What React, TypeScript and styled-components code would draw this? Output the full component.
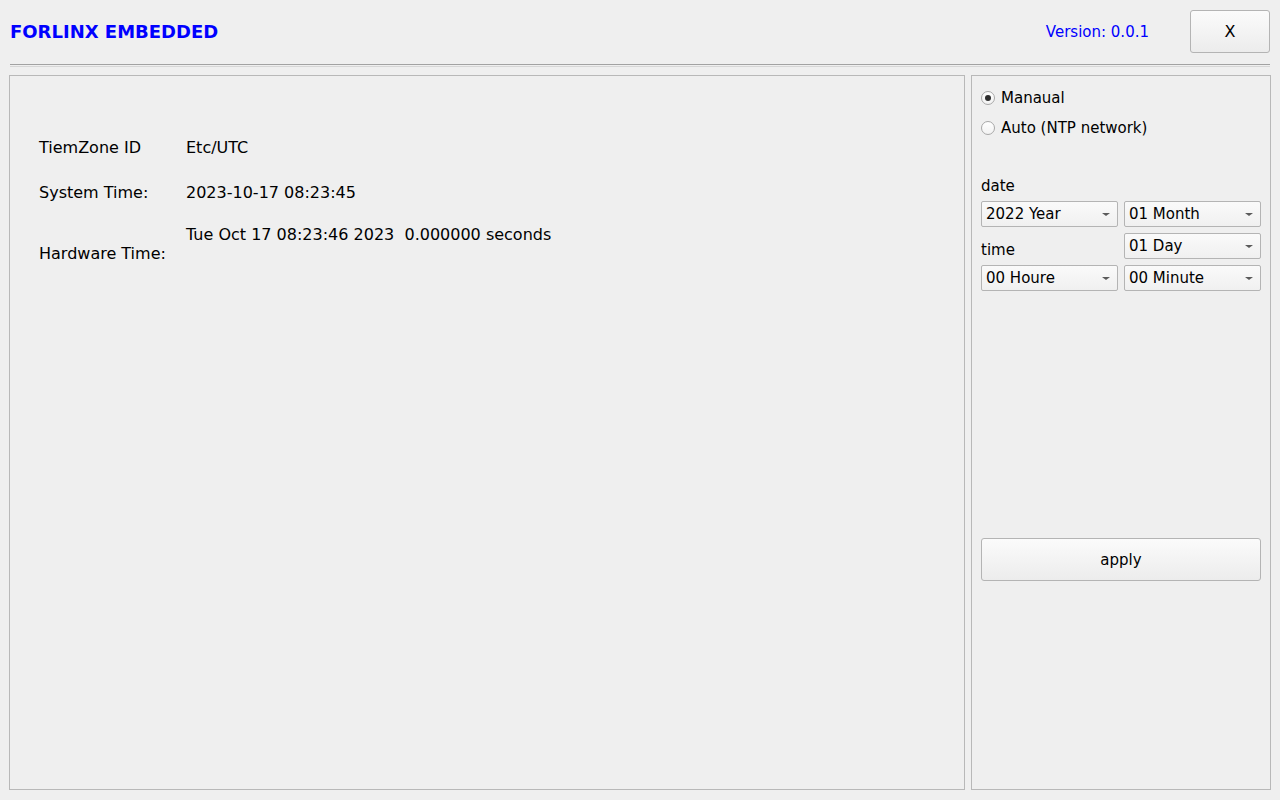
import React, { useState } from 'react';
import styled, { createGlobalStyle } from 'styled-components';

const GlobalStyle = createGlobalStyle`
  html, body {
    margin: 0;
    padding: 0;
    background: #efefef;
  }
  body {
    font-family: "DejaVu Sans", "Liberation Sans", sans-serif;
    font-size: 16px;
    color: #000;
  }
`;

const Page = styled.div`
  width: 1280px;
  height: 800px;
  box-sizing: border-box;
  padding: 10px 9px 10px 9px;
  display: flex;
  flex-direction: column;
`;

const Header = styled.div`
  display: flex;
  align-items: center;
  height: 43px;
  margin: 0 1px;
`;

const Title = styled.div`
  flex: 1;
  color: #0000ff;
  font-weight: bold;
  font-size: 18px;
`;

const Version = styled.div`
  color: #0000ff;
  font-size: 15px;
  margin-right: 41px;
`;

const PushButton = styled.button<{ $wide?: boolean }>`
  font-family: inherit;
  font-size: ${(p) => (p.$wide ? '15px' : '16px')};
  color: #000;
  height: 43px;
  width: ${(p) => (p.$wide ? '100%' : '80px')};
  border: 1px solid #b4b4b4;
  border-radius: 3px;
  background: linear-gradient(#fbfbfb, #ececec);
  padding: 0;
  cursor: pointer;
`;

const Separator = styled.div`
  margin: 11px 1px 0 1px;
  height: 1px;
  border-top: 1px solid #a2a2a2;
  border-bottom: 1px solid #d6d6d6;
`;

const Body = styled.div`
  flex: 1;
  display: flex;
  gap: 6px;
  margin-top: 8px;
`;

const Panel = styled.div<{ $width?: number }>`
  box-sizing: border-box;
  border: 1px solid #b8b8b8;
  ${(p) => (p.$width ? `width: ${p.$width}px;` : 'flex: 1;')}
`;

const InfoGrid = styled.div`
  display: grid;
  grid-template-columns: 147px auto;
  grid-auto-rows: min-content;
  row-gap: 25px;
  padding: 62px 0 0 29px;
  line-height: 20px;
`;

const InfoLabel = styled.div<{ $drop?: number }>`
  padding-top: ${(p) => p.$drop || 0}px;
`;

const InfoValue = styled.div<{ $lift?: number }>`
  white-space: pre;
  margin-top: ${(p) => -(p.$lift || 0)}px;
`;

const Side = styled.div`
  padding: 12px 9px 0 9px;
  display: flex;
  flex-direction: column;
  font-size: 15px;
`;

const RadioRow = styled.label`
  display: flex;
  align-items: center;
  gap: 6px;
  height: 20px;
  margin-bottom: 10px;
  cursor: pointer;
`;

const RadioDot = styled.span<{ $on?: boolean }>`
  width: 14px;
  height: 14px;
  box-sizing: border-box;
  border-radius: 50%;
  border: 1px solid #a8a8a8;
  background: linear-gradient(#ffffff, #f2f2f2);
  display: flex;
  align-items: center;
  justify-content: center;
  &::after {
    content: '';
    width: 6px;
    height: 6px;
    border-radius: 50%;
    background: ${(p) => (p.$on ? '#2e2e2e' : 'transparent')};
  }
`;

const DateGrid = styled.div`
  display: grid;
  grid-template-columns: 137px 137px;
  grid-template-rows: 20px 26px 26px 26px;
  column-gap: 6px;
  row-gap: 6px;
  margin-top: 27px;
  line-height: 20px;
`;

const SmallLabel = styled.div<{ $low?: boolean }>`
  align-self: ${(p) => (p.$low ? 'end' : 'start')};
  ${(p) => (p.$low ? 'margin-bottom: -1px;' : 'margin-top: 1px;')}
`;

const Combo = styled.div`
  box-sizing: border-box;
  height: 26px;
  border: 1px solid #b4b4b4;
  border-radius: 2px;
  background: linear-gradient(#fafafa, #f0f0f0);
  display: flex;
  align-items: center;
  padding: 0 7px 0 4px;
`;

const ComboText = styled.span`
  flex: 1;
`;

const Arrow = styled.span`
  width: 0;
  height: 0;
  border-left: 4px solid transparent;
  border-right: 4px solid transparent;
  border-top: 3px solid #5a5a5a;
`;

const ApplyWrap = styled.div`
  margin-top: 247px;
`;

function ComboBox({ text }: { text: string }): React.ReactElement {
  return (
    <Combo>
      <ComboText>{text}</ComboText>
      <Arrow />
    </Combo>
  );
}

function App(): React.ReactElement {
  const [mode, setMode] = useState('manual');

  return (
    <Page>
      <GlobalStyle />
      <Header>
        <Title>FORLINX EMBEDDED</Title>
        <Version>Version: 0.0.1</Version>
        <PushButton>X</PushButton>
      </Header>
      <Separator />
      <Body>
        <Panel>
          <InfoGrid>
            <InfoLabel>TiemZone ID</InfoLabel>
            <InfoValue>Etc/UTC</InfoValue>
            <InfoLabel>System Time:</InfoLabel>
            <InfoValue>2023-10-17 08:23:45</InfoValue>
            <InfoLabel $drop={16}>Hardware Time:</InfoLabel>
            <InfoValue $lift={3}>Tue Oct 17 08:23:46 2023  0.000000 seconds</InfoValue>
          </InfoGrid>
        </Panel>
        <Panel $width={300}>
          <Side>
            <RadioRow onClick={() => setMode('manual')}>
              <RadioDot $on={mode === 'manual'} />
              Manaual
            </RadioRow>
            <RadioRow onClick={() => setMode('auto')}>
              <RadioDot $on={mode === 'auto'} />
              Auto (NTP network)
            </RadioRow>
            <DateGrid>
              <SmallLabel>date</SmallLabel>
              <div />
              <ComboBox text="2022 Year" />
              <ComboBox text="01 Month" />
              <SmallLabel $low>time</SmallLabel>
              <ComboBox text="01 Day" />
              <ComboBox text="00 Houre" />
              <ComboBox text="00 Minute" />
            </DateGrid>
            <ApplyWrap>
              <PushButton $wide>apply</PushButton>
            </ApplyWrap>
          </Side>
        </Panel>
      </Body>
    </Page>
  );
}

export default App;
